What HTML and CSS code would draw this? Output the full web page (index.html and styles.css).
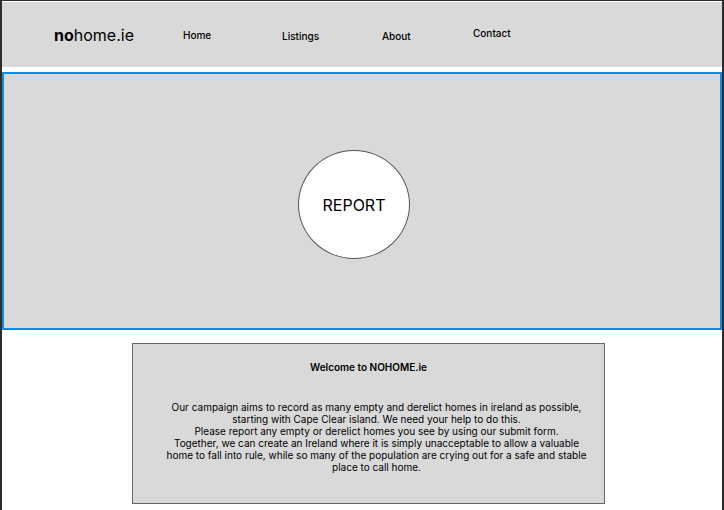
FILE: index.html
```html
<!DOCTYPE html>
<html lang="en">
<head>
<meta charset="utf-8">
<title>nohome.ie</title>
<link rel="stylesheet" href="styles.css">
</head>
<body>
<div class="page">
  <header class="header">
    <div class="logo"><b>no</b>home.ie</div>
    <nav class="nav">
      <a class="nav-item nav-home" href="#">Home</a>
      <a class="nav-item nav-listings" href="#">Listings</a>
      <a class="nav-item nav-about" href="#">About</a>
      <a class="nav-item nav-contact" href="#">Contact</a>
    </nav>
  </header>
  <section class="hero">
    <div class="report">REPORT</div>
  </section>
  <section class="welcome">
    <h1 class="welcome-title">Welcome to NOHOME.ie</h1>
    <p class="welcome-text">Our campaign aims to record as many empty and derelict homes in ireland as possible,<br>starting with Cape Clear island. We need your help to do this.<br>Please report any empty or derelict homes you see by using our submit form.<br>Together, we can create an Ireland where it is simply unacceptable to allow a valuable<br>home to fall into rule, while so many of the population are crying out for a safe and stable<br>place to call home.</p>
  </section>
</div>
</body>
</html>
```
FILE: styles.css
```css
html, body {
  margin: 0;
  padding: 0;
}
body {
  background: #2c2c2c;
  font-family: Inter, "Liberation Sans", sans-serif;
  color: #000;
  height: 510px;
  overflow: hidden;
}
.page {
  margin: 1px 2px 0 2px;
  padding-top: 1px;
  background: #fff;
  min-height: 520px;
}
.header {
  background: #d9d9d9;
  height: 65px;
  display: flex;
  align-items: center;
}
.logo {
  width: 129px;
  padding-left: 52px;
  box-sizing: content-box;
  font-size: 16px;
  margin-top: 0;
}
.logo b {
  font-weight: 700;
}
.nav {
  display: flex;
  align-items: center;
}
.nav-item {
  color: #000;
  text-decoration: none;
  font-size: 10px;
  font-weight: 500;
}
.nav-home { width: 99px; margin-top: 0; }
.nav-listings { width: 100px; margin-top: 2px; }
.nav-about { width: 91px; margin-top: 3px; }
.nav-contact { margin-top: -3px; }
.hero {
  margin-top: 5px;
  border: 2px solid #0c8ce9;
  background: #d9d9d9;
  padding: 76px 0 0 294px;
  box-sizing: content-box;
  height: 178px;
}
.report {
  width: 110px;
  height: 107px;
  border-radius: 50%;
  background: #fff;
  border: 1px solid #555;
  display: flex;
  align-items: center;
  justify-content: center;
  font-size: 16px;
}
.welcome {
  margin: 13px 0 0 130px;
  width: 471px;
  height: 159px;
  border: 1px solid #666;
  background: #d9d9d9;
  text-align: center;
}
.welcome-title {
  margin: 17px 0 0;
  font-size: 10px;
  font-weight: 600;
  line-height: 12px;
}
.welcome-text {
  margin: 28px 0 0;
  padding-left: 16px;
  font-size: 10px;
  line-height: 12px;
  font-weight: 400;
}
```
